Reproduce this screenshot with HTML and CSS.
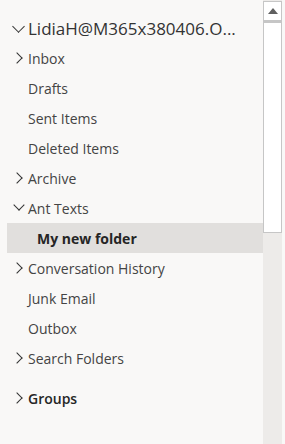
FILE: index.html
```html
<!DOCTYPE html>
<html lang="en">
<head>
  <meta charset="UTF-8" />
  <title>Folders</title>
  <link rel="stylesheet" href="styles.css">
</head>
<body>
  <div class="pane">
    <div class="tree">
      <div class="row account"><span class="chev down"></span>LidiaH@M365x380406.O...</div>
      <div class="row"><span class="chev right"></span>Inbox</div>
      <div class="row"><span class="chev"></span>Drafts</div>
      <div class="row"><span class="chev"></span>Sent Items</div>
      <div class="row"><span class="chev"></span>Deleted Items</div>
      <div class="row"><span class="chev right"></span>Archive</div>
      <div class="row"><span class="chev down"></span>Ant Texts</div>
      <div class="row sub selected">My new folder</div>
      <div class="row"><span class="chev right"></span>Conversation History</div>
      <div class="row"><span class="chev"></span>Junk Email</div>
      <div class="row"><span class="chev"></span>Outbox</div>
      <div class="row"><span class="chev right"></span>Search Folders</div>
      <div class="row groups"><span class="chev right"></span>Groups</div>
    </div>
    <div class="scrollbar">
      <div class="scroll-btn">
        <svg width="10" height="6" viewBox="0 0 10 6"><path d="M5 0 L10 6 L0 6 Z" fill="#606060"/></svg>
      </div>
      <div class="scroll-thumb"></div>
    </div>
  </div>
</body>
</html>
```

FILE: styles.css
```css
* {
  box-sizing: border-box;
  margin: 0;
  padding: 0;
}
body {
  background: #f9f8f7;
  font-family: 'Open Sans', 'Noto Sans', sans-serif;
  color: #444;
  width: 285px;
  height: 444px;
  overflow: hidden;
}
.pane {
  display: flex;
  height: 444px;
}
.tree {
  width: 263px;
  padding-top: 13px;
  padding-left: 7px;
}
.row {
  display: flex;
  align-items: center;
  height: 30px;
  font-size: 14px;
  white-space: nowrap;
}
.account {
  font-size: 17px;
  color: #333;
}
.chev {
  width: 21px;
  height: 30px;
  position: relative;
  flex-shrink: 0;
}
.chev.right::before,
.chev.down::before {
  content: '';
  position: absolute;
  border-right: 1.5px solid #333;
  border-bottom: 1.5px solid #333;
}
.chev.right::before {
  left: 6px;
  top: 11px;
  width: 7px;
  height: 7px;
  transform: rotate(-45deg);
}
.chev.down::before {
  left: 8px;
  top: 8px;
  width: 7px;
  height: 7px;
  transform: rotate(45deg);
}
.account .chev.down::before {
  left: 7px;
  top: 9px;
  width: 8px;
  height: 8px;
}
.sub {
  padding-left: 30px;
}
.selected {
  background: #e1dfdd;
  font-weight: 700;
  color: #252525;
}
.groups {
  margin-top: 10px;
  color: #262626;
  font-weight: 600;
}
.scrollbar {
  width: 19px;
  background: #edebe9;
  display: flex;
  flex-direction: column;
  padding-top: 1px;
}
.scroll-btn {
  height: 20px;
  background: #fff;
  border: 1px solid #c6c6c6;
  display: flex;
  align-items: center;
  justify-content: center;
}
.scroll-thumb {
  height: 212px;
  background: #fff;
  border: 1px solid #c6c6c6;
  border-top-width: 2px;
}
```
